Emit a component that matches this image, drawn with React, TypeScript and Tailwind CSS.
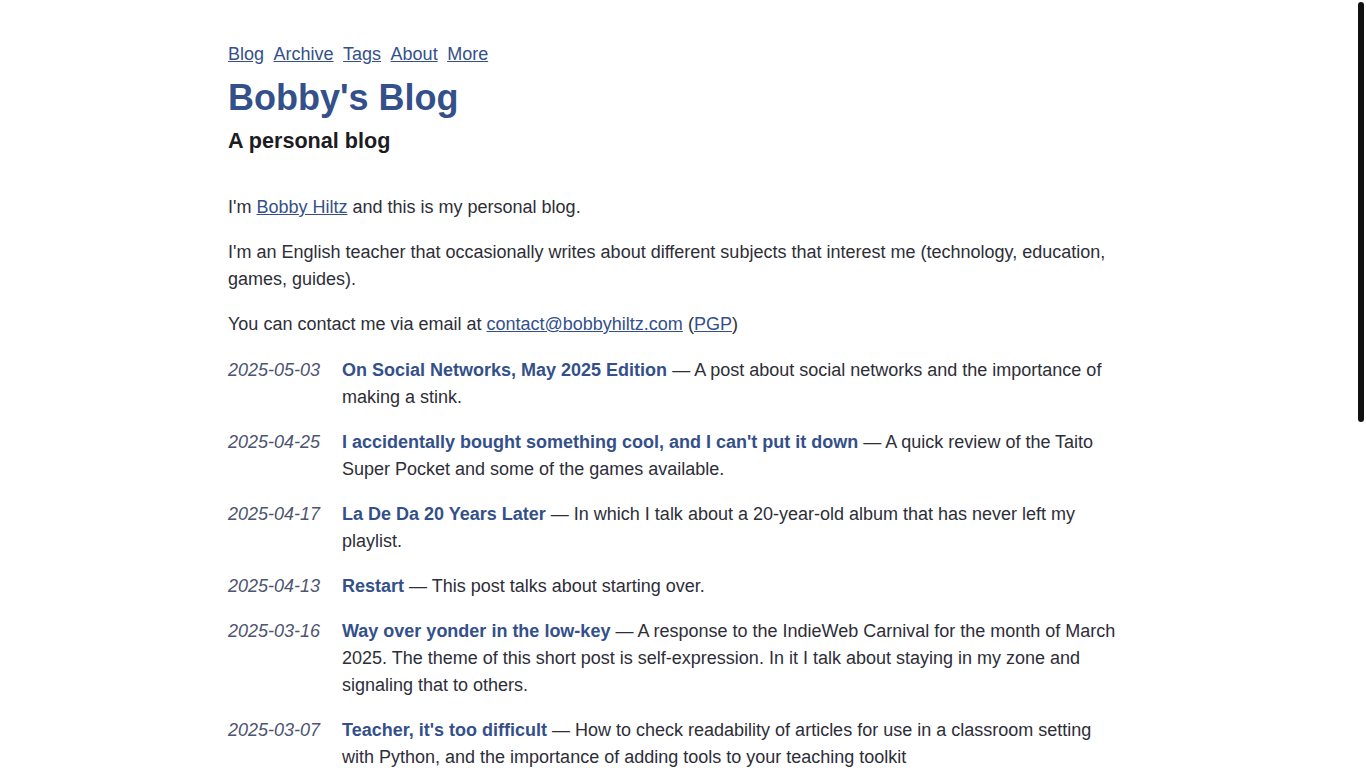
const posts = [
  {
    date: "2025-05-03",
    title: "On Social Networks, May 2025 Edition",
    desc: "A post about social networks and the importance of making a stink.",
  },
  {
    date: "2025-04-25",
    title: "I accidentally bought something cool, and I can't put it down",
    desc: "A quick review of the Taito Super Pocket and some of the games available.",
  },
  {
    date: "2025-04-17",
    title: "La De Da 20 Years Later",
    desc: "In which I talk about a 20-year-old album that has never left my playlist.",
  },
  {
    date: "2025-04-13",
    title: "Restart",
    desc: "This post talks about starting over.",
  },
  {
    date: "2025-03-16",
    title: "Way over yonder in the low-key",
    desc: "A response to the IndieWeb Carnival for the month of March 2025. The theme of this short post is self-expression. In it I talk about staying in my zone and signaling that to others.",
  },
  {
    date: "2025-03-07",
    title: "Teacher, it's too difficult",
    desc: "How to check readability of articles for use in a classroom setting with Python, and the importance of adding tools to your teaching toolkit",
  },
  {
    date: "2025-02-21",
    title: "Notes on a quiet month",
    desc: "A few small updates about school, reading and the things I've been tinkering with lately.",
  },
  {
    date: "2025-02-02",
    title: "Self-hosting my RSS reader",
    desc: "A short guide on setting up a feed reader on a small server at home.",
  },
  {
    date: "2025-01-18",
    title: "Games I played in 2024",
    desc: "A look back at the games that kept me busy over the past year, and a few I never finished.",
  },
  {
    date: "2025-01-05",
    title: "New year, same blog",
    desc: "Some thoughts on writing more often and keeping things simple.",
  },
  {
    date: "2024-12-20",
    title: "Grading season",
    desc: "What the end of the semester looks like from the teacher's desk.",
  },
  {
    date: "2024-12-01",
    title: "A small site redesign",
    desc: "I changed a few colours and fonts on this blog. Here is why.",
  },
]

const nav = ["Blog", "Archive", "Tags", "About", "More"]

export default function App() {
  return (
    <div className="min-h-screen bg-white font-['Liberation_Sans',Arial,sans-serif] text-[18px] leading-[27px] text-[#2d2e38]">
      {/* overlay scrollbar thumb */}
      <div className="fixed right-[2px] top-[2px] h-[420px] w-[6px] rounded-full bg-[#111111]" />

      <div className="mx-auto min-h-[1404px] w-[910px] pt-[41px] pb-[40px]">
        <nav className="flex gap-[9.5px]">
          {nav.map((n) => (
            <a key={n} href="#" className="text-[#34508a] underline">
              {n}
            </a>
          ))}
        </nav>
        <h1 className="mt-[6px] text-[36px] font-bold leading-[48px] text-[#34508a]">Bobby's Blog</h1>
        <h2 className="mt-[6px] text-[21.6px] font-bold leading-[26px] text-[#1c1c22]">A personal blog</h2>

        <div className="mt-[40px]">
          <p>
            I'm{" "}
            <a href="#" className="text-[#34508a] underline">
              Bobby Hiltz
            </a>{" "}
            and this is my personal blog.
          </p>
          <p className="mt-[18px]">
            I'm an English teacher that occasionally writes about different subjects that interest me (technology,
            education, games, guides).
          </p>
          <p className="mt-[18px]">
            You can contact me via email at{" "}
            <a href="#" className="text-[#34508a] underline">
              contact@bobbyhiltz.com
            </a>{" "}
            (
            <a href="#" className="text-[#34508a] underline">
              PGP
            </a>
            )
          </p>
        </div>

        <ul className="mt-[19px] w-[890px]">
          {posts.map((p) => (
            <li key={p.date} className="mb-[18px] flex">
              <span className="w-[114px] shrink-0 italic text-[#4d5570]">{p.date}</span>
              <div className="flex-1">
                <a href="#" className="font-bold text-[#34508a]">
                  {p.title}
                </a>{" "}
                — {p.desc}
              </div>
            </li>
          ))}
        </ul>
      </div>
    </div>
  )
}
